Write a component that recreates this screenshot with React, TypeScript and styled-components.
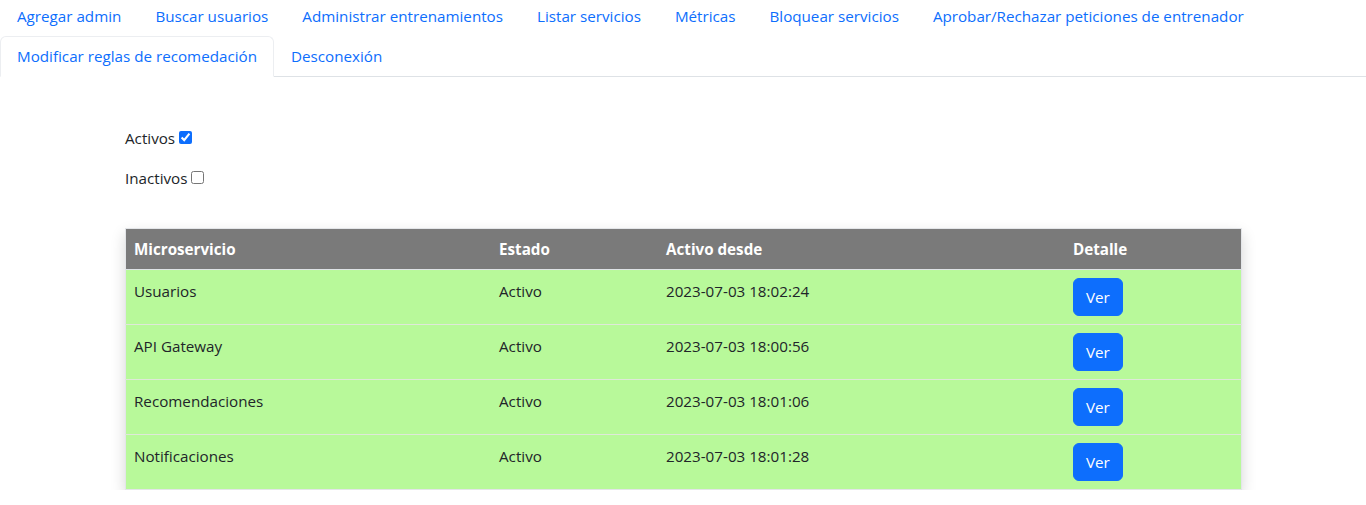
import React from "react";
import styled, { createGlobalStyle } from "styled-components";

const Global = createGlobalStyle`
  body {
    margin: 0;
    font-family: "Open Sans", "Noto Sans", sans-serif;
    font-size: 15.2px;
    line-height: 24px;
    color: #212529;
    background: #fff;
  }
`;

const Nav = styled.ul`
  display: flex;
  flex-wrap: wrap;
  list-style: none;
  margin: -4.5px 0 0 0;
  padding: 0;
  border-bottom: 1px solid #dee2e6;
`;

const NavItem = styled.li`
  margin-bottom: -1px;
`;

const NavLink = styled.a<{ $active?: boolean }>`
  display: block;
  padding: 7.5px 16px;
  border: 1px solid ${(p) => (p.$active ? "#eceef1" : "transparent")};
  border-bottom-color: ${(p) => (p.$active ? "#fff" : "transparent")};
  border-radius: 6px 6px 0 0;
  background: ${(p) => (p.$active ? "#fff" : "transparent")};
  color: #0d6efd;
  text-decoration: none;
  white-space: nowrap;
  cursor: pointer;
`;

const Main = styled.main`
  padding: 49px 125px 0 125px;
`;

const Filters = styled.div`
  display: grid;
  justify-items: start;
  row-gap: 16px;
  margin-bottom: 38px;
`;

const Filter = styled.label`
  display: flex;
  align-items: center;
  height: 24px;
`;

const Check = styled.input`
  width: 13px;
  height: 13px;
  margin: 0 0 0 4px;
  accent-color: #0d6efd;
`;

const Table = styled.table`
  width: 100%;
  table-layout: fixed;
  border-collapse: collapse;
  border: 1px solid #e3e5e8;
  box-shadow: 0 6px 14px rgba(0, 0, 0, 0.16);
`;

const Th = styled.th<{ $w: number }>`
  width: ${(p) => p.$w}px;
  text-align: left;
  background: #7a7a7a;
  color: #fff;
  font-weight: 700;
  padding: 8px;
  border-bottom: 1px solid #dee2e6;
`;

const Tr = styled.tr`
  background: #b8f99a;
  border-bottom: 1px solid #dfe8d9;
  &:last-child {
    border-bottom: none;
  }
`;

const Td = styled.td`
  vertical-align: top;
  padding: 9px 8px 8px;
`;

const BtnTd = styled.td`
  vertical-align: top;
  padding: 8px;
`;

const Button = styled.button`
  font-family: inherit;
  font-size: 15.2px;
  line-height: 24px;
  color: #fff;
  background: #0d6efd;
  border: 1px solid #0d6efd;
  border-radius: 6px;
  padding: 6px 12px;
  cursor: pointer;
`;

const tabs = [
  "Agregar admin",
  "Buscar usuarios",
  "Administrar entrenamientos",
  "Listar servicios",
  "Métricas",
  "Bloquear servicios",
  "Aprobar/Rechazar peticiones de entrenador",
  "Modificar reglas de recomedación",
  "Desconexión",
];

const rows = [
  ["Usuarios", "Activo", "2023-07-03 18:02:24"],
  ["API Gateway", "Activo", "2023-07-03 18:00:56"],
  ["Recomendaciones", "Activo", "2023-07-03 18:01:06"],
  ["Notificaciones", "Activo", "2023-07-03 18:01:28"],
];

export default function App() {
  return (
    <>
      <Global />
      <Nav>
        {tabs.map((t) => (
          <NavItem key={t}>
            <NavLink $active={t === "Modificar reglas de recomedación"}>{t}</NavLink>
          </NavItem>
        ))}
      </Nav>
      <Main>
        <Filters>
          <Filter>
            Activos
            <Check type="checkbox" defaultChecked />
          </Filter>
          <Filter>
            Inactivos
            <Check type="checkbox" />
          </Filter>
        </Filters>
        <Table>
          <thead>
            <tr>
              <Th $w={349}>Microservicio</Th>
              <Th $w={151}>Estado</Th>
              <Th $w={391}>Activo desde</Th>
              <Th $w={160}>Detalle</Th>
            </tr>
          </thead>
          <tbody>
            {rows.map((r) => (
              <Tr key={r[0]}>
                <Td>{r[0]}</Td>
                <Td>{r[1]}</Td>
                <Td>{r[2]}</Td>
                <BtnTd>
                  <Button>Ver</Button>
                </BtnTd>
              </Tr>
            ))}
          </tbody>
        </Table>
      </Main>
    </>
  );
}
